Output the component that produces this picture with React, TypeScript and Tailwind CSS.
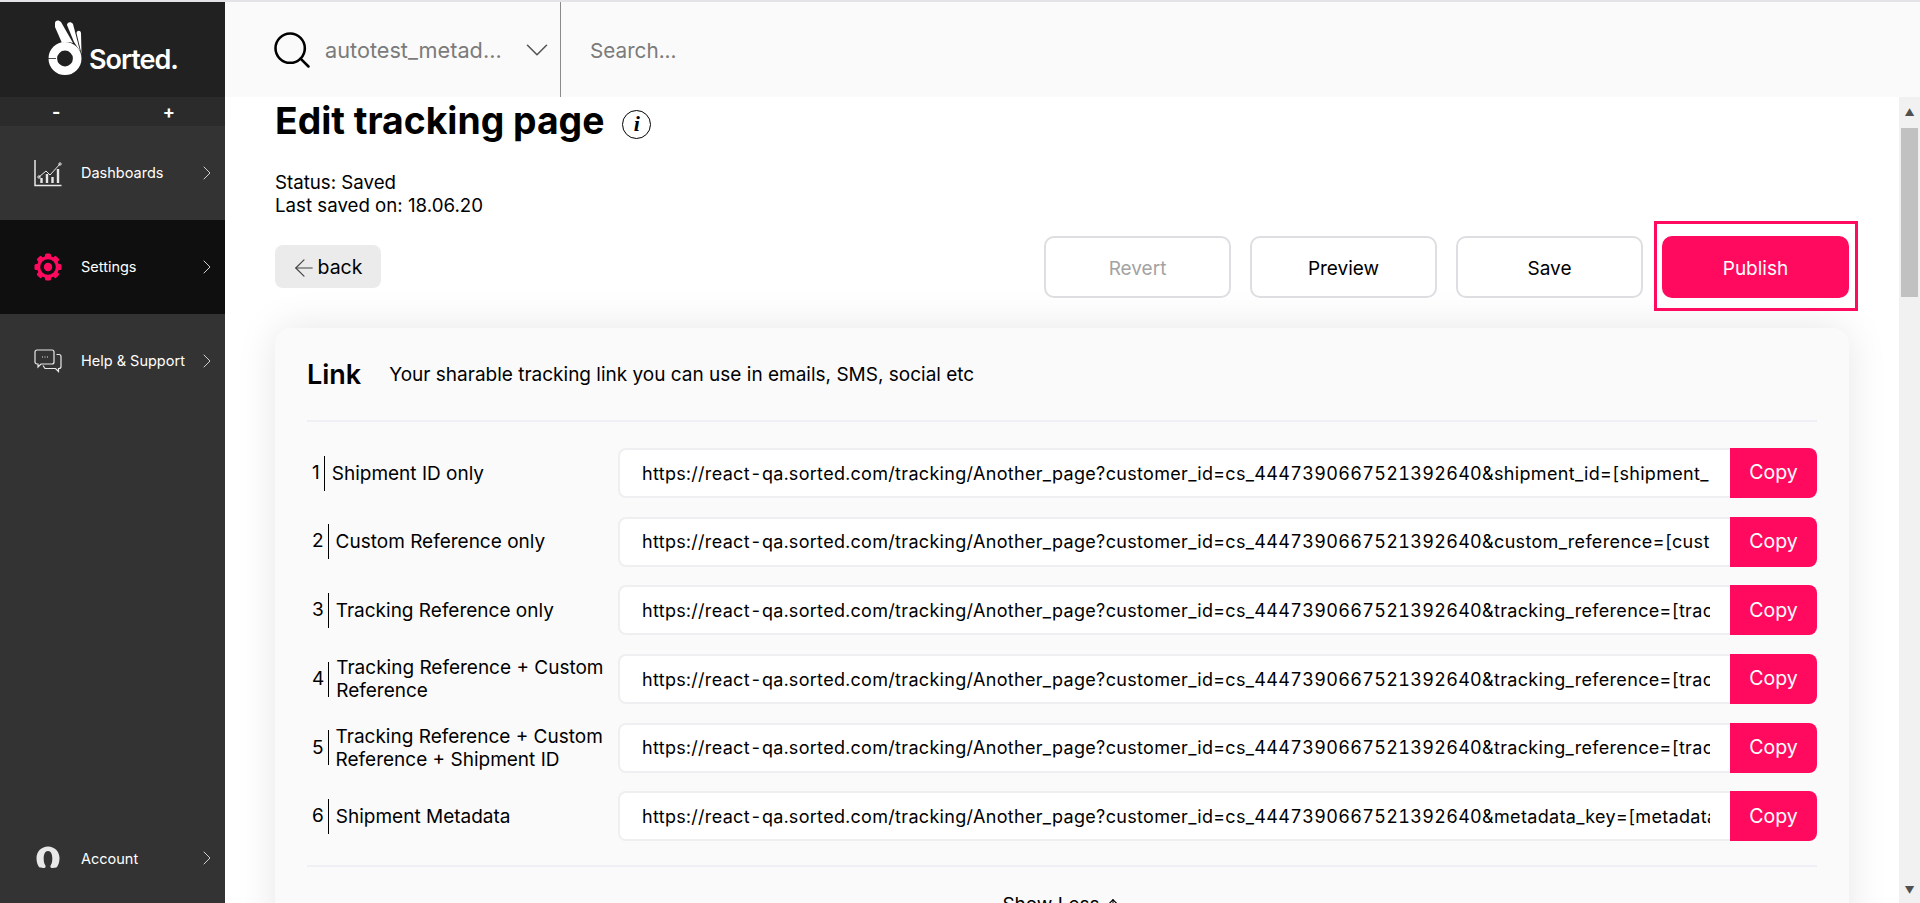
import React from 'react';
import { ArrowLeft, ArrowUp, ChevronRight, ChevronDown, Search } from 'lucide-react';

const base = 'https://react-qa.sorted.com/tracking/Another_page?customer_id=cs_4447390667521392640';

const links = [
  { label: 'Shipment ID only', url: base + '&shipment_id=[shipment_id]' },
  { label: 'Custom Reference only', url: base + '&custom_reference=[custom_reference]' },
  { label: 'Tracking Reference only', url: base + '&tracking_reference=[tracking_reference]' },
  { label: 'Tracking Reference + Custom Reference', url: base + '&tracking_reference=[tracking_reference]&custom_reference=[custom_reference]' },
  { label: 'Tracking Reference + Custom Reference + Shipment ID', url: base + '&tracking_reference=[tracking_reference]&custom_reference=[custom_reference]&shipment_id=[shipment_id]' },
  { label: 'Shipment Metadata', url: base + '&metadata_key=[metadata_key]&metadata_value=[metadata_value]' },
];

const Logo = () => (
  <svg width="36" height="58" viewBox="0 0 36 58" fill="none">
    <path d="M8 3C8 0 12-.5 14 2l12 21c-4-1.500-8-1.500-11 0L8 7z" fill="#fff" />
    <path d="M20 5c0-3 4-4 6-1l7 27-6-9z" fill="#fff" />
    <path d="M29.500 13c.5-3 4-3 4.500 0l.5 21z" fill="#fff" />
    <circle cx="18" cy="38.500" r="12.200" stroke="#fff" strokeWidth="8.600" />
    <path d="M1 38.500h8" stroke="#212121" strokeWidth="0.800" />
  </svg>
);

const DashIcon = () => (
  <svg width="28" height="28" viewBox="0 0 28 28" fill="none" stroke="#e8e8e8">
    <path d="M1 1v25.500h26.500" strokeWidth="1.500" />
    <path d="M5 18l7-6 4 4 10-11" strokeWidth="1" />
    <circle cx="5" cy="18" r="1.200" strokeWidth="1" />
    <circle cx="26" cy="5" r="1.200" strokeWidth="1" />
    <path d="M7.500 24v-5M13 24v-9M18.500 24v-6M24 24V10" strokeWidth="2.400" />
  </svg>
);

const GearIcon = () => (
  <svg width="28" height="28" viewBox="0 0 28 28" fill="none">
    <g fill="#ff0a5e">
      <rect x="11" y="0.500" width="6" height="27" rx="1.500" />
      <rect x="11" y="0.500" width="6" height="27" rx="1.500" transform="rotate(45 14 14)" />
      <rect x="11" y="0.500" width="6" height="27" rx="1.500" transform="rotate(90 14 14)" />
      <rect x="11" y="0.500" width="6" height="27" rx="1.500" transform="rotate(135 14 14)" />
      <circle cx="14" cy="14" r="11" />
    </g>
    <circle cx="14" cy="14" r="7.800" fill="#0f0f0f" />
    <circle cx="14" cy="14" r="4.200" fill="#ff0a5e" />
  </svg>
);

const HelpIcon = () => (
  <svg width="28" height="24" viewBox="0 0 28 24" fill="none" stroke="#e8e8e8" strokeWidth="1.200">
    <path d="M3 1h15a2 2 0 0 1 2 2v10a2 2 0 0 1-2 2H7l-3 3v-3H3a2 2 0 0 1-2-2V3a2 2 0 0 1 2-2z" />
    <path d="M22.500 5.500H25a2 2 0 0 1 2 2v10a2 2 0 0 1-2 2h-.500v3l-3-3H11l-2-3" />
    <path d="M8 8h1M10.500 8h1M13 8h1" />
  </svg>
);

const AccountIcon = () => (
  <svg width="24" height="24" viewBox="0 0 24 24" fill="none">
    <path d="M12 .5C5.500.5.500 5.500.500 12c0 3.500.8 6.500 2.500 9 1.500.8 4 1.200 6 .7.8-.5.8-1.700.3-2.500C8 17.500 7.700 15 7.700 12.500 7.700 8.500 9 5 12 5s4.300 3.500 4.300 7.500c0 2.500-.3 5-1.600 6.700-.5.8-.5 2 .3 2.500 2 .5 4.500.1 6-.7 1.700-2.500 2.500-5.500 2.500-9C23.500 5.500 18.500.5 12 .5z" fill="#e8e8e8" />
  </svg>
);

const NavItem = ({ icon, label, active }: { icon: React.ReactNode; label: string; active?: boolean }) => (
  <div className={`h-[94px] flex items-center pl-[34px] pr-[6px] ${active ? 'bg-[#0f0f0f]' : ''}`}>
    <div className="w-[47px] shrink-0 flex items-center">{icon}</div>
    <span className="flex-1 text-[14.5px] text-white whitespace-nowrap">{label}</span>
    <ChevronRight className="w-[24px] h-[24px] text-[#cfcfcf]" strokeWidth={1} />
  </div>
);

const Sidebar = () => (
  <aside className="w-[225px] shrink-0 bg-[#333333] flex flex-col">
    <div className="h-[95px] bg-[#212121] flex items-start pl-[47px] pt-[18px] gap-[6px]">
      <Logo />
      <span className="text-white text-[27px] font-semibold tracking-[-1px] mt-[25px] leading-[30px]">Sorted.</span>
    </div>
    <div className="h-[29px] bg-[#2b2b2b] grid grid-cols-2 items-center text-center text-white font-bold text-[18px] leading-none">
      <span>-</span>
      <span>+</span>
    </div>
    <NavItem icon={<DashIcon />} label="Dashboards" />
    <NavItem icon={<GearIcon />} label="Settings" active />
    <NavItem icon={<HelpIcon />} label="Help & Support" />
    <div className="mt-auto h-[90px] flex items-center pl-[36px] pr-[6px]">
      <div className="w-[45px] shrink-0 flex items-center"><AccountIcon /></div>
      <span className="flex-1 text-[14.5px] text-white mt-[1px]">Account</span>
      <ChevronRight className="w-[24px] h-[24px] text-[#cfcfcf]" strokeWidth={1} />
    </div>
  </aside>
);

const Header = () => (
  <header className="h-[95px] shrink-0 bg-[#fafafa] flex items-center">
    <div className="w-[336px] h-full flex items-center pl-[45px] border-r border-[#8a8a8a] shrink-0">
      <Search className="w-[44px] h-[44px] text-black shrink-0" strokeWidth={1.4} />
      <span className="ml-[11px] w-[193px] text-[21.7px] text-[#7b7b7b] whitespace-nowrap mt-[2px]">autotest_metad...</span>
      <ChevronDown className="w-[38px] h-[38px] text-[#555] shrink-0" strokeWidth={1} />
    </div>
    <span className="ml-[29px] text-[20.7px] text-[#7b7b7b] mt-[2px]">Search...</span>
  </header>
);

const ActionButton = ({ label, muted }: { label: string; muted?: boolean }) => (
  <button className={`w-[187px] h-[62px] pt-[5px] rounded-[10px] border-2 border-[#dedee2] bg-white text-[19px] ${muted ? 'text-[#a3a3a3]' : 'text-black'}`}>
    {label}
  </button>
);

const LinkRow = ({ n, label, url }: { n: number; label: string; url: string }) => (
  <div className="flex items-center h-[50px]">
    <div className="w-[311px] shrink-0 flex items-center pl-[5px]">
      <span className="text-[19px] text-black">{n}</span>
      <div className="w-px h-[35px] bg-black ml-[4px] mr-[7px] shrink-0" />
      <span className="text-[19px] leading-[23px] text-black flex-1 pr-[6px]">{label}</span>
    </div>
    <div className="flex-1 h-full flex min-w-0">
      <input
        readOnly
        value={url}
        className="flex-1 min-w-0 h-full bg-white border-2 border-r-0 border-[#efeff1] rounded-l-[8px] pl-[22px] pr-[20px] text-[18px] tracking-[0.32px] tabular-nums text-black outline-none"
      />
      <button className="w-[87px] h-full shrink-0 bg-[#ff0a5e] text-white text-[19.5px] rounded-r-[8px]">Copy</button>
    </div>
  </div>
);

const Scrollbar = () => (
  <div className="w-[21px] shrink-0 bg-[#f1f1f1] flex flex-col items-center">
    <div className="h-[31px] flex items-center justify-center text-[#505050] text-[10px]">▲</div>
    <div className="w-[17px] h-[169px] bg-[#c1c1c1]" />
    <div className="mt-auto h-[20px] flex items-start justify-center text-[#505050] text-[10px]">▼</div>
  </div>
);

export default function App() {
  return (
    <div className="h-[903px] w-full overflow-hidden flex flex-col bg-white font-['Inter',sans-serif]">
      <div className="h-[2px] bg-[#e4e4e8] shrink-0" />
      <div className="flex-1 flex min-h-0">
        <Sidebar />
        <div className="flex-1 flex flex-col min-w-0">
          <Header />
          <div className="flex-1 flex min-h-0">
            <main className="flex-1 min-w-0 overflow-hidden pl-[50px] pr-[50px] bg-white">
              <div className="flex items-center h-[48px]">
                <h1 className="text-[37.3px] font-bold text-black leading-none">Edit tracking page</h1>
                <div className="ml-[18px] mt-[6px] w-[29px] h-[29px] rounded-full border-[1.5px] border-black flex items-center justify-center font-['Liberation_Serif',serif] italic font-bold text-[22px] leading-none">i</div>
              </div>
              <div className="mt-[26px] text-[18.7px] leading-[23px] text-black">
                <p>Status: Saved</p>
                <p>Last saved on: 18.06.20</p>
              </div>
              <div className="flex items-start justify-between mt-[4px]">
                <button className="mt-[24px] w-[106px] h-[43px] pr-[4px] pt-[2px] rounded-[8px] bg-[#ebebeb] text-[19.5px] text-black flex items-center justify-center">
                  <ArrowLeft className="w-[28px] h-[28px] text-[#444]" strokeWidth={1} />back
                </button>
                <div className="flex gap-[19px] items-start pt-[15px]">
                  <ActionButton label="Revert" muted />
                  <ActionButton label="Preview" />
                  <ActionButton label="Save" />
                  <div className="relative">
                    <button className="w-[187px] h-[62px] pt-[4px] rounded-[10px] bg-[#ff0a5e] text-white text-[19px]">Publish</button>
                    <div className="absolute -left-[8px] -right-[9px] -top-[15px] -bottom-[13px] border-[3px] border-[#ff0a5e]" />
                  </div>
                </div>
              </div>
              <section className="mt-[30px] bg-[#fafafa] rounded-[16px] shadow-[0_0_40px_rgba(0,0,0,0.1)] px-[32px] pb-[40px]">
                <div className="h-[94px] pt-[2px] flex items-center border-b-2 border-[#efeff5]">
                  <h2 className="text-[27px] font-semibold text-black">Link</h2>
                  <p className="ml-[28px] text-[19px] text-black">Your sharable tracking link you can use in emails, SMS, social etc</p>
                </div>
                <div className="mt-[26px] flex flex-col gap-[18.7px]">
                  {links.map((l, i) => (
                    <LinkRow key={l.label} n={i + 1} label={l.label} url={l.url} />
                  ))}
                </div>
                <div className="mt-[24px] border-t-2 border-[#efeff5] pt-[24px] flex items-center justify-center gap-[4px] text-[19px] leading-[28px] text-black">
                  Show Less
                  <ArrowUp className="w-[18px] h-[18px]" strokeWidth={1.5} />
                </div>
              </section>
            </main>
            <Scrollbar />
          </div>
        </div>
      </div>
    </div>
  );
}
